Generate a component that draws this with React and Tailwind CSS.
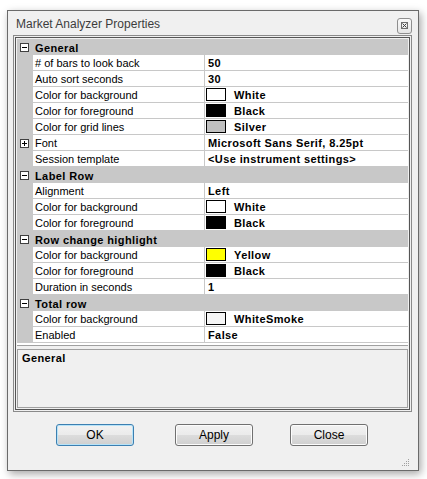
import React from "react";

const font = { fontFamily: '"Liberation Sans", Arial, sans-serif' };

const rows = [
  { head: "General" },
  { label: "# of bars to look back", value: "50" },
  { label: "Auto sort seconds", value: "30" },
  { label: "Color for background", value: "White", swatch: "bg-white" },
  { label: "Color for foreground", value: "Black", swatch: "bg-black" },
  { label: "Color for grid lines", value: "Silver", swatch: "bg-[#c0c0c0]" },
  { label: "Font", value: "Microsoft Sans Serif, 8.25pt", plus: true },
  { label: "Session template", value: "<Use instrument settings>" },
  { head: "Label Row" },
  { label: "Alignment", value: "Left" },
  { label: "Color for background", value: "White", swatch: "bg-white" },
  { label: "Color for foreground", value: "Black", swatch: "bg-black" },
  { head: "Row change highlight" },
  { label: "Color for background", value: "Yellow", swatch: "bg-[#ffff00]" },
  { label: "Color for foreground", value: "Black", swatch: "bg-black" },
  { label: "Duration in seconds", value: "1" },
  { head: "Total row" },
  { label: "Color for background", value: "WhiteSmoke", swatch: "bg-[#f5f5f5]" },
  { label: "Enabled", value: "False" },
];

const ToggleBox = ({ plus }) => (
  <svg width="9" height="9" viewBox="0 0 9 9" className="ml-[3px]">
    <rect x="0.5" y="0.5" width="8" height="8" fill="white" stroke="#404040" />
    <line x1="2" y1="4.5" x2="7" y2="4.5" stroke="#000" />
    {plus && <line x1="4.5" y1="2" x2="4.5" y2="7" stroke="#000" />}
  </svg>
);

const Row = ({ row }) => {
  if (row.head) {
    return (
      <div className="flex h-[16px] items-center bg-[#c8c8c8]">
        <div className="flex w-[16px] items-center">
          <ToggleBox />
        </div>
        <span className="pl-[2px] pt-[1px] text-[11px] font-bold tracking-[0.4px] leading-[16px] text-black">
          {row.head}
        </span>
      </div>
    );
  }
  return (
    <div className="flex h-[16px]">
      <div className="flex w-[16px] items-center bg-[#c8c8c8]">
        {row.plus && <ToggleBox plus />}
      </div>
      <div className="w-[172px] border-b border-r border-[#c8c8c8] pl-[2px] pt-[1px] text-[11px] leading-[14px] text-black">
        {row.label}
      </div>
      <div className="flex flex-1 items-center border-b border-[#c8c8c8] text-[11px] font-bold tracking-[0.4px] leading-[15px] text-black">
        {row.swatch ? (
          <>
            <span className={`ml-[1px] h-[13px] w-[20px] border border-black ${row.swatch}`} />
            <span className="ml-[8px] pt-[1px]">{row.value}</span>
          </>
        ) : (
          <span className="pl-[3px] pt-[1px]">{row.value}</span>
        )}
      </div>
    </div>
  );
};

const Button = ({ children, focused, className }) => (
  <button
    className={`relative h-[22px] w-[78px] rounded-[3px] border text-[12px] text-black ${
      focused
        ? "border-[#3c7fb1] shadow-[inset_0_0_0_1px_#b7e3f8]"
        : "border-[#707070] shadow-[inset_0_0_0_1px_#fcfcfc]"
    } bg-[linear-gradient(#f2f2f2_0%,#ebebeb_50%,#dddddd_50%,#cfcfcf_100%)] ${className}`}
  >
    {children}
  </button>
);

export default function App() {
  return (
    <div className="h-[479px] w-[427px] bg-white pl-[7px] pt-[10px]" style={font}>
      <div className="h-[461px] w-[412px] border border-[#6a6a6a] bg-[#f0f0f0] shadow-[2px_3px_8px_rgba(0,0,0,0.35)]">
        {/* Title bar */}
        <div className="flex h-[24px] items-center justify-between pl-[8px] pr-[6px]">
          <span className="pt-[1px] text-[12px] text-[#3c3c3c]">Market Analyzer Properties</span>
          <div className="mt-[5px] flex h-[16px] w-[15px] items-center justify-center rounded-[3px] border border-[#8e8e8e] bg-[linear-gradient(#fafafa,#e6e6e6)]">
            <svg width="7" height="7" viewBox="0 0 7 7">
              <rect x="0.5" y="0.5" width="6" height="6" fill="none" stroke="#707070" />
              <path d="M1.5 1.5 L5.5 5.5 M5.5 1.5 L1.5 5.5" stroke="#404040" />
            </svg>
          </div>
        </div>

        {/* Property grid frame */}
        <div className="ml-[5px] w-[399px] border border-[#8a8a8a] p-[1px]">
          <div className="border border-[#555] bg-[#f0f0f0] p-[1px]">
            <div className="h-[307px] border-b border-[#a0a0a0] bg-white">
              {rows.map((row, i) => (
                <Row key={i} row={row} />
              ))}
            </div>
            <div className="mt-[3px] h-[59px] border border-[#a0a0a0] bg-[#f0f0f0] pl-[4px] pt-[2px] text-[11px] leading-[13px]">
              <span className="font-bold tracking-[0.4px] text-black">General</span>
            </div>
          </div>
        </div>

        {/* Buttons */}
        <div className="relative mt-[12px] flex h-[44px]">
          <Button focused className="ml-[48px]">OK</Button>
          <Button className="ml-[41px]">Apply</Button>
          <Button className="ml-[37px]">Close</Button>
          <svg width="8" height="8" viewBox="0 0 8 8" className="absolute bottom-[1px] right-[8px]">
            <g fill="#a0a0a0">
              <rect x="6" y="0" width="1" height="1" />
              <rect x="4" y="2" width="1" height="1" />
              <rect x="6" y="2" width="1" height="1" />
              <rect x="2" y="4" width="1" height="1" />
              <rect x="4" y="4" width="1" height="1" />
              <rect x="6" y="4" width="1" height="1" />
              <rect x="0" y="6" width="1" height="1" />
              <rect x="2" y="6" width="1" height="1" />
              <rect x="4" y="6" width="1" height="1" />
              <rect x="6" y="6" width="1" height="1" />
            </g>
          </svg>
        </div>
      </div>
    </div>
  );
}
